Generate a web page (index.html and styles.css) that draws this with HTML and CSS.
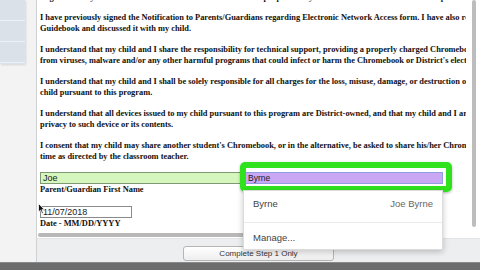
FILE: index.html
```html
<!DOCTYPE html>
<html lang="en">
<head>
    <meta charset="UTF-8">
    <meta name="viewport" content="width=device-width, initial-scale=1.0">
    <title>Chromebook Agreement</title>
    <link rel="stylesheet" href="styles.css">
</head>
<body>
    <div class="screen">
        <div class="main">
            <aside class="side">
                <div class="nav">
                    <div class="nav-item"></div>
                    <div class="nav-item"></div>
                    <div class="nav-item"></div>
                </div>
            </aside>
            <div class="work">
                <div class="page">
                    <div class="doc">
                        <p>I agree that my child will use the Chromebook for educational purposes only and will follow all school rules and policies.</p>
                        <p>I have previously signed the Notification to Parents/Guardians regarding Electronic Network Access form. I have also read the Student/Parent<br>Guidebook and discussed it with my child.</p>
                        <p>I understand that my child and I share the responsibility for technical support, providing a properly charged Chromebook each day, and protecting it<br>from viruses, malware and/or any other harmful programs that could infect or harm the Chromebook or District's electronic network.</p>
                        <p>I understand that my child and I shall be solely responsible for all charges for the loss, misuse, damage, or destruction of the device issued to my<br>child pursuant to this program.</p>
                        <p>I understand that all devices issued to my child pursuant to this program are District-owned, and that my child and I are not entitled to any expectation of<br>privacy to such device or its contents.</p>
                        <p>I consent that my child may share another student's Chromebook, or in the alternative, be asked to share his/her Chromebook with another student at any<br>time as directed by the classroom teacher.</p>

                        <div class="name-row">
                            <div class="field field-first">
                                <input class="input input-fill" type="text" value="Joe">
                                <div class="label">Parent/Guardian First Name</div>
                            </div>
                            <div class="field field-last">
                                <input class="input input-select" type="text" value="Byrne">
                                <div class="label">Parent/Guardian Last Name</div>
                                <div class="highlight"></div>
                                <div class="dropdown">
                                    <div class="dd-item"><span>Byrne</span><span class="dd-sub">Joe Byrne</span></div>
                                    <div class="dd-sep"></div>
                                    <div class="dd-item">Manage...</div>
                                </div>
                            </div>
                        </div>

                        <div class="field field-date">
                            <input class="input input-date" type="text" value="11/07/2018">
                            <div class="label">Date - MM/DD/YYYY</div>
                            <svg class="cursor" width="7" height="11" viewBox="0 0 7 11">
                                <path d="M0.5 0.5 L0.5 9 L2.5 7.2 L4 10.5 L5.3 9.9 L3.9 6.7 L6.5 6.7 Z" fill="#111" stroke="#fff" stroke-width="0.8"/>
                            </svg>
                        </div>
                    </div>
                    <div class="vscroll"><div class="vthumb"></div></div>
                </div>
                <div class="hbar"><div class="hthumb"></div></div>
                <div class="footer">
                    <button class="step-btn">Complete Step 1 Only</button>
                </div>
            </div>
        </div>
        <div class="taskbar"></div>
    </div>
</body>
</html>
```

FILE: styles.css
```css
body {
    margin: 0;
    width: 480px;
    height: 270px;
    overflow: hidden;
    background: #fff;
}
.screen {
    display: flex;
    flex-direction: column;
    height: 270px;
}
.main {
    display: flex;
    height: 262px;
}
.side {
    width: 36px;
    background: #f3f3f4;
    border-right: 1px solid #cfd1d3;
}
.nav {
    width: 25px;
    height: 64px;
    background: #dbe1e8;
    box-shadow: 1px 1px 2px rgba(0, 0, 0, 0.12);
}
.nav-item {
    height: 20px;
    border-bottom: 1px solid #eef1f5;
}
.work {
    flex: 1;
    display: flex;
    flex-direction: column;
    min-width: 0;
    position: relative;
}
.page {
    display: flex;
    height: 232px;
    background: #fff;
}
.doc {
    flex: 1;
    min-width: 0;
    padding-left: 3px;
    font-family: "Liberation Serif", "Times New Roman", serif;
    font-weight: bold;
    font-size: 8.4px;
    line-height: 11px;
    color: #111;
    white-space: nowrap;
}
.doc p {
    margin: 0 0 10px;
    overflow: hidden;
}
.doc p:first-child {
    margin-top: -8px;
    height: 10px;
    margin-bottom: 10px;
}
.name-row {
    display: flex;
    margin-top: 10px;
}
.field {
    position: relative;
}
.field-first {
    width: 203px;
}
.field-last {
    width: 198px;
    margin-left: 2px;
}
.input {
    display: block;
    box-sizing: border-box;
    width: 100%;
    height: 12px;
    margin: 0;
    padding: 0 2px;
    border: 1px solid #8c8c8c;
    font-family: "Liberation Sans", Arial, sans-serif;
    font-size: 9px;
    color: #1a1a1a;
    outline: none;
}
.input-fill {
    background: #d5f6bd;
    border-color: #7f9a73;
}
.input-select {
    background: #c9a7f5;
    border-color: #8f9ee0;
    font-size: 8.5px;
}
.label {
    height: 11px;
}
.field-date {
    width: 92px;
    margin-top: 11px;
}
.input-date {
    background: #fff;
    border-color: #8a8a8a;
    height: 12px;
}
.cursor {
    position: absolute;
    left: -2px;
    top: -3px;
}
.highlight {
    position: absolute;
    left: -5px;
    top: -10px;
    width: 212px;
    height: 30px;
    box-sizing: border-box;
    border: 6px solid #30e21e;
    border-radius: 5px;
    box-shadow: 0 1px 3px rgba(0, 0, 0, 0.3);
    z-index: 3;
}
.dropdown {
    position: absolute;
    left: -2px;
    top: 18px;
    width: 200px;
    height: 60px;
    box-sizing: border-box;
    padding-top: 4px;
    background: #fff;
    border: 1px solid #dcdcdc;
    box-shadow: 0 2px 6px rgba(0, 0, 0, 0.22);
    font-family: "Liberation Sans", Arial, sans-serif;
    font-weight: normal;
    font-size: 9.5px;
    color: #444;
    z-index: 5;
}
.dd-item {
    display: flex;
    justify-content: space-between;
    height: 18px;
    line-height: 18px;
    padding: 0 9px 0 9px;
}
.dd-sub {
    color: #666;
}
.dd-sep {
    margin: 9px 0 6px;
    border-top: 1px solid #ebebeb;
}
.vscroll {
    width: 14px;
    background: #fff;
}
.vthumb {
    width: 4px;
    height: 227px;
    margin-left: 6px;
    background: #bdbdbd;
    border-radius: 2px;
}
.hbar {
    height: 6px;
    background: #fff;
    padding-left: 1px;
}
.hthumb {
    width: 360px;
    height: 4px;
    margin-top: 1px;
    background: #b8b8b8;
    border-radius: 2px;
}
.footer {
    flex: 1;
    display: flex;
    justify-content: center;
    align-items: flex-start;
    padding-top: 7px;
    box-sizing: border-box;
    background: #eceef0;
    border-top: 1px solid #e2e4e6;
}
.step-btn {
    width: 151px;
    height: 15px;
    padding: 0;
    background: linear-gradient(#ffffff, #eeeeee);
    border: 1px solid #b5b5b5;
    border-radius: 3px;
    font-family: "Liberation Sans", Arial, sans-serif;
    font-size: 8px;
    color: #333;
}
.taskbar {
    height: 8px;
    background: #6c6c6c;
    border-top: 1px solid #8a8a8a;
    box-sizing: border-box;
}
```
